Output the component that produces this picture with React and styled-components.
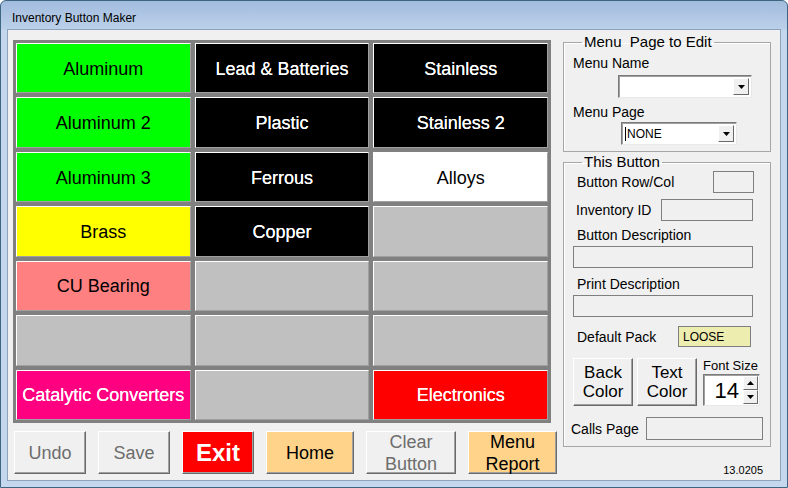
import React from "react";
import styled, { createGlobalStyle } from "styled-components";

const GlobalStyle = createGlobalStyle`
  html, body { margin: 0; padding: 0; background: #fff; }
  body { font-family: "Liberation Sans", Arial, sans-serif; }
  * { box-sizing: border-box; }
`;

const Window = styled.div`
  width: 788px;
  height: 488px;
  border: 1px solid #3d6680;
  border-radius: 6px 6px 0 0;
  background: linear-gradient(#a2bcde 0, #bcd1ea 29px, #c4d7ed 29px, #c4d7ed 100%);
  padding: 0 6px 6px;
  display: flex;
  flex-direction: column;
`;

const TitleBar = styled.div`
  height: 28px;
  padding: 5px 0 0 5px;
  display: flex;
  align-items: center;
  font-size: 12px;
  color: #000;
`;

const Client = styled.div`
  flex: 1;
  background: #f0f0f0;
  border: 1px solid #8da2bc;
  display: flex;
  padding: 3px 0 0 5px;
`;

const LeftCol = styled.div`
  width: 544px;
  margin-top: 7px;
  display: flex;
  flex-direction: column;
`;

const Grid = styled.div`
  width: 538px;
  height: 383px;
  background: #808080;
  padding: 3px;
  display: grid;
  grid-template-columns: repeat(3, 1fr);
  grid-template-rows: repeat(7, 1fr);
  gap: 4px;
`;

const Cell = styled.div`
  background: ${(p) => p.$bg};
  color: ${(p) => p.$fg};
  border: 1px solid;
  border-color: #fff #a0a0a0 #a0a0a0 #fff;
  display: flex;
  align-items: center;
  justify-content: center;
  padding-top: 2px;
  font-size: 18px;
  white-space: nowrap;
  overflow: hidden;
  ${(p) => (p.$fg === "#fff" ? "text-shadow: 0 0 0.4px #fff;" : "")}
`;

const ActionRow = styled.div`
  display: flex;
  gap: 12px;
  height: 43px;
  margin: 8px 0 0 1px;
`;

const ActionButton = styled.div`
  width: ${(p) => p.$w}px;
  background: ${(p) => p.$bg || "#f0f0f0"};
  color: ${(p) => p.$fg || "#000"};
  font-size: ${(p) => (p.$big ? 24 : 18)}px;
  font-weight: ${(p) => (p.$big ? "bold" : "normal")};
  line-height: 22px;
  text-align: center;
  border: 1px solid;
  border-color: #fff #696969 #696969 #fff;
  box-shadow: inset -1px -1px #a0a0a0;
  display: flex;
  align-items: center;
  justify-content: center;
`;

const RightCol = styled.div`
  width: 208px;
  margin: 1px 0 0 6px;
  display: flex;
  flex-direction: column;
`;

const Group = styled.fieldset`
  margin: ${(p) => p.$mt || 0}px 0 0;
  padding: 0 0 ${(p) => p.$pb}px;
  border: 1px solid #a6a6a6;
  box-shadow: inset 1px 1px #fff;
  display: flex;
  flex-direction: column;
`;

const Legend = styled.legend`
  font-size: 15px;
  line-height: 16px;
  padding: 0 2px;
  margin-left: 18px;
  color: #000;
`;

const Label = styled.div`
  font-size: 14px;
  line-height: 16px;
  color: #000;
  padding-left: ${(p) => p.$pl}px;
  margin-top: ${(p) => p.$mt || 0}px;
  white-space: nowrap;
`;

const Combo = styled.div`
  align-self: flex-end;
  width: ${(p) => p.$w}px;
  height: 23px;
  margin: ${(p) => p.$mt}px ${(p) => p.$mr}px 0 0;
  background: #fff;
  border: 1px solid;
  border-color: #7a7a7a #e8e8e8 #e8e8e8 #7a7a7a;
  box-shadow: inset 1px 1px #a0a0a0;
  display: flex;
  align-items: center;
  padding: 2px 2px 2px 3px;
  font-size: 12px;
`;

const ComboText = styled.span`
  flex: 1;
  border-left: 1px solid #000;
  padding-left: 1px;
  line-height: 14px;
`;

const DropButton = styled.div`
  width: 16px;
  height: 17px;
  margin-left: auto;
  background: #f0f0f0;
  border: 1px solid;
  border-color: #fff #696969 #696969 #fff;
  display: flex;
  align-items: center;
  justify-content: center;
`;

const FieldRow = styled.div`
  display: flex;
  align-items: center;
  height: ${(p) => p.$h}px;
  margin-top: ${(p) => p.$mt}px;
`;

const Box = styled.div`
  width: ${(p) => p.$w}px;
  height: 100%;
  margin-left: ${(p) => (p.$ml != null ? `${p.$ml}px` : "auto")};
  margin-right: ${(p) => p.$mr || 0}px;
  background: ${(p) => p.$bg || "#f0f0f0"};
  border: 1px solid #7f7f7f;
  font-size: 12px;
  display: flex;
  align-items: center;
  padding-left: 4px;
  color: #000;
`;

const WideBox = styled(Box)`
  height: 22px;
  margin-top: ${(p) => p.$mt}px;
`;

const ColorRow = styled.div`
  display: flex;
  margin: 11px 0 0 9px;
  height: 48px;
`;

const ColorButton = styled.div`
  width: 60px;
  height: 48px;
  margin-right: 4px;
  background: #f0f0f0;
  border: 1px solid;
  border-color: #fff #696969 #696969 #fff;
  box-shadow: inset -1px -1px #a0a0a0;
  font-size: 17px;
  line-height: 19px;
  text-align: center;
  display: flex;
  align-items: center;
  justify-content: center;
`;

const SpinCol = styled.div`
  display: flex;
  flex-direction: column;
  margin-left: 2px;
`;

const SpinLabel = styled.div`
  font-size: 13px;
  line-height: 16px;
`;

const Spinner = styled.div`
  width: 57px;
  height: 32px;
  background: #fff;
  border: 1px solid;
  border-color: #7a7a7a #e8e8e8 #e8e8e8 #7a7a7a;
  box-shadow: inset 1px 1px #a0a0a0;
  display: flex;
  padding: 1px;
`;

const SpinValue = styled.div`
  flex: 1;
  font-size: 22px;
  text-align: right;
  padding-right: 4px;
  line-height: 29px;
`;

const SpinArrows = styled.div`
  width: 15px;
  display: flex;
  flex-direction: column;
`;

const SpinArrow = styled.div`
  flex: 1;
  background: #f0f0f0;
  border: 1px solid;
  border-color: #fff #696969 #696969 #fff;
  display: flex;
  align-items: center;
  justify-content: center;
`;

const Version = styled.div`
  font-size: 11px;
  line-height: 13px;
  text-align: right;
  padding-right: 8px;
  margin-top: 17px;
`;

const Tri = ({ up }) => (
  <svg width="7" height="4" viewBox="0 0 7 4">
    <polygon points={up ? "0,4 7,4 3.5,0" : "0,0 7,0 3.5,4"} fill="#000" />
  </svg>
);

const cells = [
  ["Aluminum", "#00ff00", "#000"],
  ["Lead & Batteries", "#000", "#fff"],
  ["Stainless", "#000", "#fff"],
  ["Aluminum 2", "#00ff00", "#000"],
  ["Plastic", "#000", "#fff"],
  ["Stainless 2", "#000", "#fff"],
  ["Aluminum 3", "#00ff00", "#000"],
  ["Ferrous", "#000", "#fff"],
  ["Alloys", "#fff", "#000"],
  ["Brass", "#ffff00", "#000"],
  ["Copper", "#000", "#fff"],
  ["", "#c0c0c0", "#000"],
  ["CU Bearing", "#ff8080", "#000"],
  ["", "#c0c0c0", "#000"],
  ["", "#c0c0c0", "#000"],
  ["", "#c0c0c0", "#000"],
  ["", "#c0c0c0", "#000"],
  ["", "#c0c0c0", "#000"],
  ["Catalytic Converters", "#ff0080", "#fff"],
  ["", "#c0c0c0", "#000"],
  ["Electronics", "#ff0000", "#fff"],
];

export default function App() {
  return (
    <>
      <GlobalStyle />
      <Window>
        <TitleBar>Inventory Button Maker</TitleBar>
        <Client>
          <LeftCol>
            <Grid>
              {cells.map(([text, bg, fg], i) => (
                <Cell key={i} $bg={bg} $fg={fg}>
                  {text}
                </Cell>
              ))}
            </Grid>
            <ActionRow>
              <ActionButton $w={72} $fg="#6d6d6d">Undo</ActionButton>
              <ActionButton $w={72} $fg="#6d6d6d">Save</ActionButton>
              <ActionButton $w={72} $bg="#ff0000" $fg="#fff" $big>Exit</ActionButton>
              <ActionButton $w={88} $bg="#ffd38a">Home</ActionButton>
              <ActionButton $w={90} $fg="#6d6d6d">Clear<br />Button</ActionButton>
              <ActionButton $w={89} $bg="#ffd38a">Menu<br />Report</ActionButton>
            </ActionRow>
          </LeftCol>

          <RightCol>
            <Group $pb={6}>
              <Legend>Menu&nbsp; Page to Edit</Legend>
              <Label $pl={9} $mt={5}>Menu Name</Label>
              <Combo $w={134} $mr={18} $mt={4}>
                <DropButton><Tri /></DropButton>
              </Combo>
              <Label $pl={9} $mt={6}>Menu Page</Label>
              <Combo $w={116} $mr={33} $mt={2}>
                <ComboText>NONE</ComboText>
                <DropButton><Tri /></DropButton>
              </Combo>
            </Group>

            <Group $pb={6} $mt={2}>
              <Legend>This Button</Legend>
              <FieldRow $h={22} $mt={1}>
                <Label $pl={13}>Button Row/Col</Label>
                <Box $w={41} $mr={16} />
              </FieldRow>
              <FieldRow $h={22} $mt={6}>
                <Label $pl={12}>Inventory ID</Label>
                <Box $w={92} $mr={17} />
              </FieldRow>
              <Label $pl={13} $mt={6}>Button Description</Label>
              <WideBox $w={180} $ml={9} $mt={3} />
              <Label $pl={13} $mt={8}>Print Description</Label>
              <WideBox $w={180} $ml={9} $mt={3} />
              <FieldRow $h={21} $mt={9}>
                <Label $pl={13}>Default Pack</Label>
                <Box $w={73} $mr={19} $bg="#ededb0">LOOSE</Box>
              </FieldRow>
              <ColorRow>
                <ColorButton>Back<br />Color</ColorButton>
                <ColorButton>Text<br />Color</ColorButton>
                <SpinCol>
                  <SpinLabel>Font Size</SpinLabel>
                  <Spinner>
                    <SpinValue>14</SpinValue>
                    <SpinArrows>
                      <SpinArrow><Tri up /></SpinArrow>
                      <SpinArrow><Tri /></SpinArrow>
                    </SpinArrows>
                  </Spinner>
                </SpinCol>
              </ColorRow>
              <FieldRow $h={23} $mt={11}>
                <Label $pl={7}>Calls Page</Label>
                <Box $w={117} $mr={7} />
              </FieldRow>
            </Group>
            <Version>13.0205</Version>
          </RightCol>
        </Client>
      </Window>
    </>
  );
}
